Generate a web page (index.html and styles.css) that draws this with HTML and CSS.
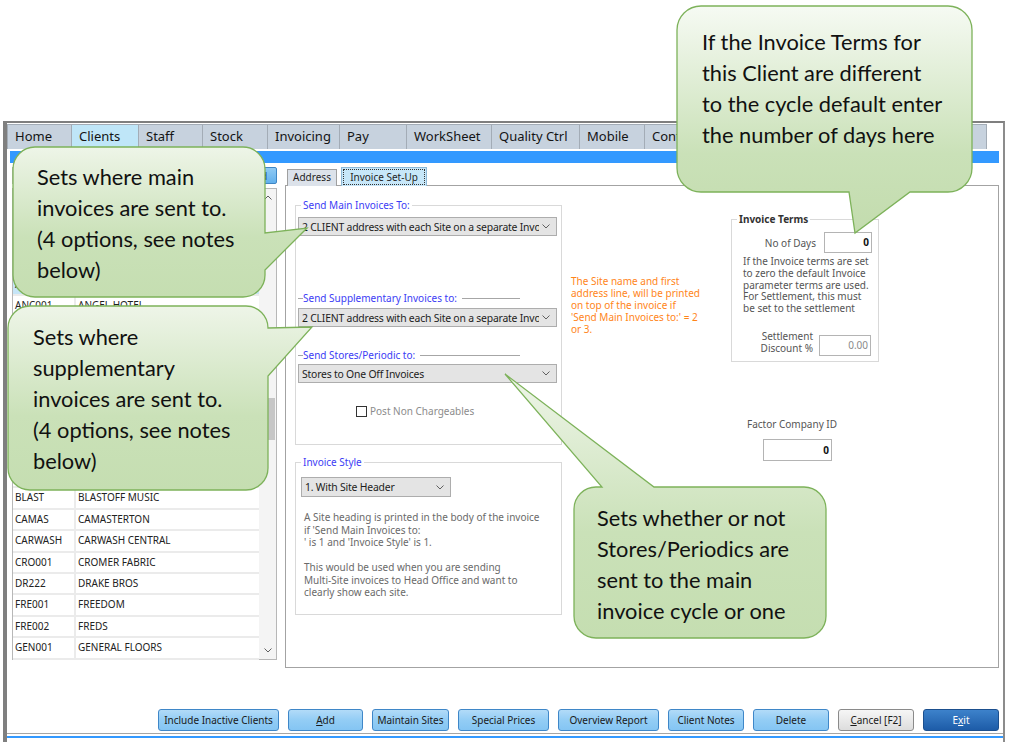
FILE: index.html
```html
<!DOCTYPE html>
<html lang="en">
<head>
<meta charset="utf-8">
<title>Clients – Invoice Set-Up</title>
<link rel="stylesheet" href="styles.css">
</head>
<body>
<div class="screen">
  <div class="window">
    <nav class="tabs">
      <span class="tab">Home</span>
      <span class="tab active">Clients</span>
      <span class="tab">Staff</span>
      <span class="tab">Stock</span>
      <span class="tab">Invoicing</span>
      <span class="tab">Pay</span>
      <span class="tab">WorkSheet</span>
      <span class="tab">Quality Ctrl</span>
      <span class="tab">Mobile</span>
      <span class="tab">Contracts</span>
      <span class="tab">Reports</span>
      <span class="tab">Analysis</span>
      <span class="tab">Utilities</span>
    </nav>
    <div class="ribbon"></div>

    <div class="content">
      <aside class="clients">
        <div class="search">
          <span class="search-field"></span>
          <button class="search-btn">Find</button>
        </div>
        <div class="list">
          <div class="rows">
            <div class="row"><span class="code">ABB001</span><span class="name">ABBEY ROAD CARE</span></div>
            <div class="row"><span class="code">ACE001</span><span class="name">ACE CLEANING</span></div>
            <div class="row"><span class="code">ADM001</span><span class="name">ADMIRAL HOUSE</span></div>
            <div class="row"><span class="code">ALB001</span><span class="name">ALBION STORES</span></div>
            <div class="row selected"><span class="code">ALP001</span><span class="name">ALPHA OFFICES</span></div>
            <div class="row"><span class="code">ANC001</span><span class="name">ANGEL HOTEL</span></div>
            <div class="row"><span class="code">ANG002</span><span class="name">ANGLIA FOODS</span></div>
            <div class="row"><span class="code">ARC001</span><span class="name">ARCADE LEISURE</span></div>
            <div class="row"><span class="code">ASH001</span><span class="name">ASHFORD COLLEGE</span></div>
            <div class="row"><span class="code">ATL001</span><span class="name">ATLAS MOTORS</span></div>
            <div class="row"><span class="code">AVO001</span><span class="name">AVON PRINT</span></div>
            <div class="row"><span class="code">BAK001</span><span class="name">BAKERS DOZEN</span></div>
            <div class="row"><span class="code">BEL001</span><span class="name">BELMONT HALL</span></div>
            <div class="row"><span class="code">BIR001</span><span class="name">BIRCH &amp; CO</span></div>
            <div class="row"><span class="code">BLAST</span><span class="name">BLASTOFF MUSIC</span></div>
            <div class="row"><span class="code">CAMAS</span><span class="name">CAMASTERTON</span></div>
            <div class="row"><span class="code">CARWASH</span><span class="name">CARWASH CENTRAL</span></div>
            <div class="row"><span class="code">CRO001</span><span class="name">CROMER FABRIC</span></div>
            <div class="row"><span class="code">DR222</span><span class="name">DRAKE BROS</span></div>
            <div class="row"><span class="code">FRE001</span><span class="name">FREEDOM</span></div>
            <div class="row"><span class="code">FRE002</span><span class="name">FREDS</span></div>
            <div class="row"><span class="code">GEN001</span><span class="name">GENERAL FLOORS</span></div>
          </div>
          <div class="scroll">
            <span class="arrow"><svg width="8" height="5" viewBox="0 0 8 5"><path d="M0.5 4.5 L4 1 L7.5 4.5" /></svg></span>
            <span class="track"><span class="thumb"></span></span>
            <span class="arrow"><svg width="8" height="5" viewBox="0 0 8 5"><path d="M0.5 0.5 L4 4 L7.5 0.5" /></svg></span>
          </div>
        </div>
      </aside>

      <section class="detail">
        <div class="subtabs">
          <span class="subtab">Address</span>
          <span class="subtab active"><span class="focus">Invoice Set-Up</span></span>
        </div>
        <div class="panel">
          <div class="col-main">
            <fieldset class="group send">
              <legend>Send Main Invoices To:</legend>
              <div class="select wide first">
                <span class="select-text">2 CLIENT address with each Site on a separate Invoice</span>
                <svg class="chev" width="8" height="5" viewBox="0 0 8 5"><path d="M0.5 0.5 L4 4 L7.5 0.5" /></svg>
              </div>
              <div class="rule-label supp">Send Supplementary Invoices to:</div>
              <div class="select wide">
                <span class="select-text">2 CLIENT address with each Site on a separate Invoice</span>
                <svg class="chev" width="8" height="5" viewBox="0 0 8 5"><path d="M0.5 0.5 L4 4 L7.5 0.5" /></svg>
              </div>
              <div class="rule-label stores">Send Stores/Periodic to:</div>
              <div class="select wide last">
                <span class="select-text">Stores to One Off Invoices</span>
                <svg class="chev" width="8" height="5" viewBox="0 0 8 5"><path d="M0.5 0.5 L4 4 L7.5 0.5" /></svg>
              </div>
              <label class="check"><span class="box"></span>Post Non Chargeables</label>
            </fieldset>

            <fieldset class="group style">
              <legend>Invoice Style</legend>
              <div class="select short">
                <span class="select-text">1. With Site Header</span>
                <svg class="chev" width="8" height="5" viewBox="0 0 8 5"><path d="M0.5 0.5 L4 4 L7.5 0.5" /></svg>
              </div>
              <p class="style-help">A Site heading is printed in the body of the invoice<br>if 'Send Main Invoices to:<br>' is 1 and 'Invoice Style' is 1.<br><br>This would be used when you are sending<br>Multi-Site invoices to Head Office and want to<br>clearly show each site.</p>
            </fieldset>
          </div>

          <p class="note">The Site name and first<br>address line, will be printed<br>on top of the invoice if<br>'Send Main Invoices to:' = 2<br>or 3.</p>

          <div class="col-terms">
            <fieldset class="terms">
              <legend>Invoice Terms</legend>
              <div class="days">
                <span class="lbl">No of Days</span>
                <span class="num strong days-input">0</span>
              </div>
              <p class="terms-help">If the Invoice terms are set<br>to zero the default Invoice<br>parameter terms are used.<br>For Settlement, this must<br>be set to the settlement</p>
              <div class="settle">
                <span class="lbl settle-lbl">Settlement<br>Discount %</span>
                <span class="num muted settle-input">0.00</span>
              </div>
            </fieldset>
            <div class="factor">
              <span class="lbl factor-lbl">Factor Company ID</span>
              <span class="num strong factor-input">0</span>
            </div>
          </div>
        </div>
      </section>
    </div>

    <footer class="actions">
      <button class="btn w-incl">Include Inactive Clients</button>
      <button class="btn w-add"><u>A</u>dd</button>
      <button class="btn w-sites">Maintain Sites</button>
      <button class="btn w-prices">Special Prices</button>
      <button class="btn w-report">Overview Report</button>
      <button class="btn w-std">Client Notes</button>
      <button class="btn w-std">Delete</button>
      <button class="btn w-std cancel"><u>C</u>ancel [F2]</button>
      <button class="btn w-std exit">E<u>x</u>it</button>
    </footer>
    <div class="status"></div>
  </div>

  <!-- help callouts drawn over the form -->
  <div class="callout c1">
    <svg width="252" height="150" viewBox="0 0 252 150">
      <defs>
        <linearGradient id="fill1" x1="0" y1="0" x2="0" y2="1">
          <stop offset="0" stop-color="#eef5e8"/>
          <stop offset="0.6" stop-color="#cae1b8"/>
          <stop offset="1" stop-color="#c5deb1"/>
        </linearGradient>
      </defs>
      <path d="M22,0 H230 A22,22 0 0 1 252,22 V86 L294,81 L252,123 V128 A22,22 0 0 1 230,150 H22 A22,22 0 0 1 0,128 V22 A22,22 0 0 1 22,0 Z" fill="url(#fill1)" />
    </svg>
    <p class="callout-text">Sets where main<br>invoices are sent to.<br>(4 options, see notes<br>below)</p>
  </div>

  <div class="callout c2">
    <svg width="260" height="184" viewBox="0 0 260 184">
      <defs>
        <linearGradient id="fill2" x1="0" y1="0" x2="0" y2="1">
          <stop offset="0" stop-color="#eef5e8"/>
          <stop offset="0.6" stop-color="#cae1b8"/>
          <stop offset="1" stop-color="#c5deb1"/>
        </linearGradient>
      </defs>
      <path d="M22,0 H238 A22,22 0 0 1 260,22 L304,21 L260,70 V162 A22,22 0 0 1 238,184 H22 A22,22 0 0 1 0,162 V22 A22,22 0 0 1 22,0 Z" fill="url(#fill2)" />
    </svg>
    <p class="callout-text">Sets where<br>supplementary<br>invoices are sent to.<br>(4 options, see notes<br>below)</p>
  </div>

  <div class="callout c3">
    <svg width="252" height="151" viewBox="0 0 252 151">
      <defs>
        <linearGradient id="fill3" x1="0" y1="0" x2="0" y2="1">
          <stop offset="0" stop-color="#eef5e8"/>
          <stop offset="0.6" stop-color="#cae1b8"/>
          <stop offset="1" stop-color="#c5deb1"/>
        </linearGradient>
      </defs>
      <path d="M22,0 H28 L-69,-113 L80,0 H230 A22,22 0 0 1 252,22 V129 A22,22 0 0 1 230,151 H22 A22,22 0 0 1 0,129 V22 A22,22 0 0 1 22,0 Z" fill="url(#fill3)" />
    </svg>
    <p class="callout-text">Sets whether or not<br>Stores/Periodics are<br>sent to the main<br>invoice cycle or one</p>
  </div>

  <div class="callout c4">
    <svg width="295" height="186" viewBox="0 0 295 186">
      <defs>
        <linearGradient id="fill4" x1="0" y1="0" x2="0" y2="1">
          <stop offset="0" stop-color="#f6faf3"/>
          <stop offset="0.65" stop-color="#cae1b8"/>
          <stop offset="1" stop-color="#c3dcae"/>
        </linearGradient>
      </defs>
      <path d="M24,0 H271 A24,24 0 0 1 295,24 V162 A24,24 0 0 1 271,186 H233 L178,227 L172,186 H24 A24,24 0 0 1 0,162 V24 A24,24 0 0 1 24,0 Z" fill="url(#fill4)" />
    </svg>
    <p class="callout-text">If the Invoice Terms for<br>this Client are different<br>to the cycle default enter<br>the number of days here</p>
  </div>
</div>
</body>
</html>
```

FILE: styles.css
```css
body {
  margin: 0;
  background: #ffffff;
}

.screen {
  position: relative;
  width: 1010px;
  height: 742px;
  overflow: hidden;
  font-family: "Noto Sans", "Open Sans", sans-serif;
  color: #1f1f1f;
}

/* ---------- application window ---------- */
.window {
  margin: 121px 0 0 3px;
  width: 1002px;
  height: 621px;
  box-sizing: border-box;
  border-top: 2px solid #7f7f7f;
  border-left: 4px solid #7f7f7f;
  border-right: 2px solid #8c8c8c;
  display: flex;
  flex-direction: column;
}

.tabs {
  display: flex;
  height: 25px;
  margin-top: 1px;
}

.tab {
  box-sizing: border-box;
  height: 25px;
  padding-left: 7px;
  font-size: 13px;
  line-height: 23px;
  white-space: nowrap;
  overflow: hidden;
  background: #c7d2de;
  border: 1px solid #a3acb6;
  border-left: none;
  border-bottom: none;
  color: #141414;
}
.tab:first-child { border-left: 1px solid #a3acb6; width: 65px; }
.tab:nth-child(2) { width: 67px; }
.tab:nth-child(3) { width: 64px; }
.tab:nth-child(4) { width: 65px; }
.tab:nth-child(5) { width: 72px; }
.tab:nth-child(6) { width: 67px; }
.tab:nth-child(7) { width: 85px; }
.tab:nth-child(8) { width: 88px; }
.tab:nth-child(9) { width: 65px; }
.tab:nth-child(10) { width: 88px; }
.tab:nth-child(11) { width: 82px; }
.tab:nth-child(12) { width: 85px; }
.tab:nth-child(13) { width: 87px; }
.tab.active { background: #bfe6f8; }

.ribbon {
  height: 12px;
  margin: 2px 4px 0 3px;
  background: #3399ff;
}

.content {
  display: flex;
  height: 505px;
  padding: 0 4px 0 5px;
}

/* ---------- client list ---------- */
.clients {
  width: 265px;
  padding-top: 4px;
}

.search {
  display: flex;
  height: 17px;
  gap: 4px;
}
.search-field {
  flex: 1;
  box-sizing: border-box;
  border: 1px solid #b9b9b9;
}
.search-btn {
  width: 40px;
  height: 17px;
  box-sizing: border-box;
  margin: 0;
  padding: 0;
  border: 1px solid #3f86c4;
  border-radius: 2px;
  background: linear-gradient(#8fcaf4, #62b0ec);
  font: 10px "Noto Sans", sans-serif;
  color: #1a1a1a;
}

.list {
  margin-top: 4px;
  height: 472px;
  box-sizing: border-box;
  border: 1px solid #b7b7b7;
  display: flex;
}

.rows { width: 246px; }

.row {
  display: flex;
  height: 21.4px;
  box-sizing: border-box;
  border-bottom: 2px solid #ebebeb;
  font-size: 10px;
  line-height: 19px;
  color: #222;
}
.row.selected { background: #c6e5f7; }

.code {
  width: 63px;
  box-sizing: border-box;
  padding-left: 2px;
  border-right: 2px solid #ebebeb;
}
.name {
  flex: 1;
  padding-left: 2px;
  white-space: nowrap;
}

.scroll {
  width: 17px;
  background: #f4f4f4;
  display: flex;
  flex-direction: column;
}
.arrow {
  height: 17px;
  display: flex;
  align-items: center;
  justify-content: center;
}
.arrow svg path,
.chev path {
  fill: none;
  stroke: #606060;
  stroke-width: 1;
}
.track {
  flex: 1;
  display: flex;
  flex-direction: column;
  align-items: center;
}
.thumb {
  margin-top: 192px;
  width: 15px;
  height: 42px;
  background: #c6c6c6;
}

/* ---------- detail side ---------- */
.detail {
  flex: 1;
  margin-left: 8px;
  padding-top: 4px;
  display: flex;
  flex-direction: column;
}

.subtabs {
  display: flex;
  align-items: flex-end;
  gap: 4px;
  height: 19px;
  padding-left: 2px;
  margin-bottom: -1px;
  position: relative;
  z-index: 1;
}
.subtab {
  box-sizing: border-box;
  width: 50px;
  height: 17px;
  border: 1px solid #a0a0a0;
  border-bottom: none;
  background: #dce2ea;
  font-size: 10px;
  line-height: 15px;
  text-align: center;
  color: #1f1f1f;
}
.subtab.active {
  width: 86px;
  height: 19px;
  padding: 1px;
  background: #c7e7f9;
  border-color: #8fb9d6;
}
.focus {
  display: block;
  height: 16px;
  box-sizing: border-box;
  border: 1px dotted #333;
  line-height: 14px;
}

.panel {
  flex: 1;
  border: 1px solid #a3a3a3;
  background: #ffffff;
  display: flex;
  align-items: flex-start;
  padding-left: 9px;
}

.col-main {
  width: 267px;
  margin-top: 12px;
}

.group {
  margin: 0;
  padding: 0 4px 0 2px;
  border: 1px solid #d9d9d9;
  box-sizing: border-box;
  min-width: 0;
}
.group legend {
  margin-left: 3px;
  padding: 0 2px;
  font-size: 10px;
  line-height: 14px;
  color: #3c3cf5;
}
.group.send { height: 247px; }
.group.style { height: 160px; margin-top: 10px; }

.select {
  box-sizing: border-box;
  height: 19px;
  display: flex;
  align-items: center;
  padding: 0 6px 0 3px;
  background: #e4e4e4;
  border: 1px solid #adadad;
  font-size: 10.4px;
  letter-spacing: -0.2px;
  color: #1c1c1c;
}
.select-text {
  flex: 1;
  overflow: hidden;
  white-space: nowrap;
}
.chev { flex: none; margin-left: 3px; }
.select.first { margin-top: 5px; }
.select.short {
  width: 150px;
  height: 20px;
  margin: 8px 0 0 3px;
}

.rule-label {
  display: flex;
  align-items: center;
  width: 222px;
  height: 14px;
  font-size: 10px;
  color: #3c3cf5;
  white-space: nowrap;
}
.rule-label::before {
  content: "";
  width: 5px;
  border-top: 1px solid #a6a6a6;
}
.rule-label::after {
  content: "";
  flex: 1;
  margin-left: 5px;
  border-top: 1px solid #a6a6a6;
}
.rule-label.supp { margin-top: 55px; margin-bottom: 3px; }
.rule-label.stores { margin-top: 21px; margin-bottom: 2px; }

.check {
  display: flex;
  align-items: center;
  gap: 3px;
  margin: 21px 0 0 58px;
  height: 14px;
  font-size: 10px;
  color: #8c8c8c;
}
.box {
  width: 11px;
  height: 11px;
  box-sizing: border-box;
  border: 1px solid #333;
  background: #fff;
}

.style-help {
  margin: 14px 0 0 6px;
  font-size: 10px;
  line-height: 12.5px;
  color: #6a6a6a;
  white-space: nowrap;
}

.note {
  width: 150px;
  margin: 89px 0 0 9px;
  font-size: 10px;
  line-height: 12px;
  color: #ff8519;
  white-space: nowrap;
}

.col-terms {
  width: 148px;
  margin: 26px 0 0 10px;
}

.terms {
  margin: 0;
  padding: 0 6px 5px 0;
  border: 1px solid #d9d9d9;
  min-width: 0;
}
.terms legend {
  margin-left: 5px;
  padding: 0 2px;
  font-size: 10px;
  line-height: 14px;
  font-weight: 700;
  color: #333;
}

.lbl {
  font-size: 10px;
  line-height: 12px;
  color: #555;
}

.num {
  box-sizing: border-box;
  display: block;
  border: 1px solid #b4b4b4;
  background: #fff;
  text-align: right;
  padding-right: 2px;
  font-size: 10px;
}
.num.strong { color: #111; font-weight: 700; }
.num.muted { color: #8a8a8a; }

.days {
  display: flex;
  justify-content: flex-end;
  align-items: center;
  gap: 8px;
  margin-top: 6px;
}
.days-input {
  width: 48px;
  height: 21px;
  line-height: 19px;
}

.terms-help {
  margin: 3px 0 0 11px;
  font-size: 10px;
  line-height: 11.8px;
  color: #555;
  white-space: nowrap;
}

.settle {
  display: flex;
  justify-content: flex-end;
  align-items: flex-start;
  gap: 6px;
  margin-top: 15px;
}
.settle-lbl { text-align: right; }
.settle-input {
  width: 52px;
  height: 21px;
  line-height: 19px;
  margin: 5px 1px 0 0;
}

.factor {
  margin-top: 56px;
  padding-left: 16px;
}
.factor-lbl { display: block; }
.factor-input {
  width: 69px;
  height: 22px;
  line-height: 20px;
  margin: 9px 0 0 16px;
}

/* ---------- command buttons ---------- */
.actions {
  display: flex;
  justify-content: flex-end;
  gap: 9px;
  margin-top: 41px;
  padding-right: 4px;
}

.btn {
  box-sizing: border-box;
  height: 22px;
  margin: 0;
  padding: 0;
  border: 1px solid #3f87c8;
  border-radius: 3px;
  background: linear-gradient(#b2dbf8, #93cdf5 50%, #84c5f3);
  font: 10px "Noto Sans", "Open Sans", sans-serif;
  color: #1a1a1a;
  white-space: nowrap;
}
.w-incl { width: 121px; }
.w-add { width: 75px; }
.w-sites { width: 77px; }
.w-prices { width: 91px; }
.w-report { width: 101px; }
.w-std { width: 76px; }
.btn.cancel {
  border-color: #8a8a8a;
  background: linear-gradient(#f6f6f6, #dddddd);
}
.btn.exit {
  border-color: #1b4f8e;
  background: linear-gradient(#3d82cb, #1d5ca8);
  color: #ffffff;
}

.status {
  height: 2px;
  margin-top: 2px;
  border-top: 1px solid #a5a5a5;
  border-bottom: 2px solid #3399ff;
}

/* ---------- help callouts ---------- */
.callout { position: absolute; }
.callout svg {
  position: absolute;
  left: 0;
  top: 0;
  overflow: visible;
}
.callout path {
  stroke: #7db25a;
  stroke-width: 1.3;
}
.callout-text {
  position: relative;
  margin: 0;
  font-family: Lato, "Open Sans", sans-serif;
  font-size: 21.8px;
  line-height: 31px;
  color: #111;
  white-space: nowrap;
}

.c1 { left: 13px; top: 147px; width: 252px; height: 150px; }
.c1 .callout-text { padding: 14px 0 0 24px; }

.c2 { left: 8px; top: 306px; width: 260px; height: 184px; }
.c2 .callout-text { padding: 15px 0 0 25px; }

.c3 { left: 574px; top: 487px; width: 252px; height: 151px; }
.c3 .callout-text { padding: 15px 0 0 23px; }

.c4 { left: 677px; top: 6px; width: 295px; height: 186px; }
.c4 .callout-text { padding: 20px 0 0 25px; }
```
